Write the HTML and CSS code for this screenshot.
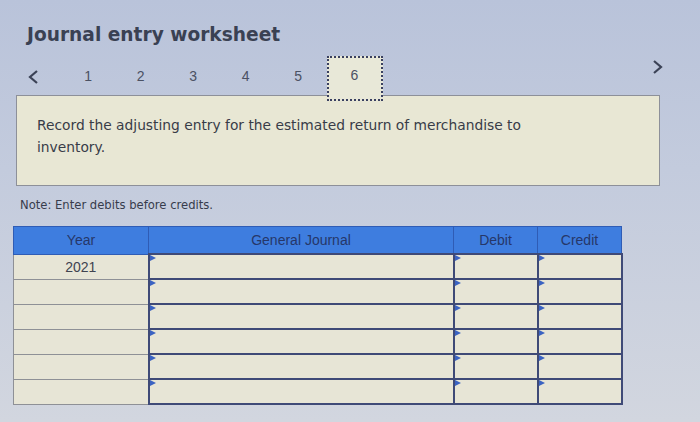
FILE: index.html
```html
<!DOCTYPE html>
<html>
<head>
<meta charset="utf-8">
<link rel="stylesheet" href="styles.css">
</head>
<body>
<div class="page">
  <h1 class="title">Journal entry worksheet</h1>
  <div class="nav">
    <span class="arrow prev"><svg width="12" height="16" viewBox="0 0 12 16"><path d="M10 2 L3 8 L10 14" fill="none" stroke="#3b4256" stroke-width="2.2"/></svg></span>
    <div class="steps">
      <span class="step">1</span>
      <span class="step">2</span>
      <span class="step">3</span>
      <span class="step">4</span>
      <span class="step">5</span>
      <span class="step current">6</span>
    </div>
    <span class="arrow next"><svg width="12" height="16" viewBox="0 0 12 16"><path d="M2 2 L9 8 L2 14" fill="none" stroke="#3b4256" stroke-width="2.2"/></svg></span>
  </div>
  <div class="prompt">
    <p>Record the adjusting entry for the estimated return of merchandise to inventory.</p>
  </div>
  <p class="note">Note: Enter debits before credits.</p>
  <table class="journal">
    <thead>
      <tr>
        <th class="c-year">Year</th>
        <th class="c-gj">General Journal</th>
        <th class="c-amt">Debit</th>
        <th class="c-amt">Credit</th>
      </tr>
    </thead>
    <tbody>
      <tr><td class="yr">2021</td><td class="in"></td><td class="in"></td><td class="in"></td></tr>
      <tr><td class="yr"></td><td class="in"></td><td class="in"></td><td class="in"></td></tr>
      <tr><td class="yr"></td><td class="in"></td><td class="in"></td><td class="in"></td></tr>
      <tr><td class="yr"></td><td class="in"></td><td class="in"></td><td class="in"></td></tr>
      <tr><td class="yr"></td><td class="in"></td><td class="in"></td><td class="in"></td></tr>
      <tr><td class="yr"></td><td class="in"></td><td class="in"></td><td class="in"></td></tr>
    </tbody>
  </table>
</div>
</body>
</html>
```
FILE: styles.css
```css
html, body {
  margin: 0;
  padding: 0;
}
body {
  width: 700px;
  height: 422px;
  overflow: hidden;
  background: linear-gradient(180deg, #b9c3da 0%, #c3cbdd 40%, #d2d6df 100%);
  font-family: "DejaVu Sans", Verdana, sans-serif;
}
.page {
  padding: 22px 0 0 0;
}
.title {
  margin: 0 0 0 27px;
  font-family: "DejaVu Sans", Verdana, sans-serif;
  font-weight: bold;
  font-size: 18.6px;
  line-height: 25px;
  color: #3a4153;
}
.nav {
  display: flex;
  align-items: flex-start;
  height: 46px;
  margin-top: 9px;
  position: relative;
}
.arrow {
  display: flex;
}
.prev {
  margin-left: 27px;
  margin-top: 13px;
}
.steps {
  display: flex;
  align-items: flex-start;
  height: 46px;
  margin-left: 23px;
}
.step {
  width: 52.5px;
  text-align: center;
  font-family: "Liberation Sans", Arial, sans-serif;
  font-size: 14px;
  line-height: 36px;
  padding-top: 2px;
  color: #4b5163;
}
.step.current {
  width: 52px;
  height: 41px;
  line-height: 34px;
  padding-top: 0;
  background: #e8e8d8;
  border: 2px dotted #3a4060;
  margin-left: 2px;
  position: relative;
  z-index: 2;
}
.next {
  margin-left: auto;
  margin-right: 36px;
  margin-top: 3px;
}
.prompt {
  margin: -7px 40px 0 16px;
  height: 91px;
  background: #e8e7d4;
  border: 1px solid #8d9099;
  box-sizing: border-box;
  padding: 18px 20px 0 20px;
}
.prompt p {
  margin: 0;
  font-size: 13.8px;
  line-height: 22px;
  color: #383c48;
  max-width: 520px;
}
.note {
  margin: 10px 0 0 20px;
  font-size: 11.6px;
  line-height: 18px;
  color: #373c4c;
}
.journal {
  margin: 12px 0 0 13px;
  border-collapse: collapse;
  table-layout: fixed;
  width: 604px;
}
.journal th {
  height: 26px;
  padding: 0;
  background: #3e7ddf;
  border: 1px solid #2f5cb5;
  font-family: "Liberation Sans", Arial, sans-serif;
  font-weight: normal;
  font-size: 14px;
  color: #263769;
}
.c-year { width: 134px; }
.c-gj { width: 304px; }
.c-amt { width: 83px; }
.journal td {
  height: 23px;
  padding: 0;
  background: #e7e5d6;
  font-family: "Liberation Sans", Arial, sans-serif;
  font-size: 14px;
  color: #3f4350;
  text-align: center;
}
.journal td.yr {
  border: 1px solid #8e9096;
  vertical-align: top;
  line-height: 24px;
}
.journal td.in {
  border: 2px solid #3f4a77;
  position: relative;
}
.journal td.in::before {
  content: "";
  position: absolute;
  left: 0;
  top: 0;
  border-left: 6px solid #3b63c2;
  border-top: 3px solid transparent;
  border-bottom: 3px solid transparent;
}
```
